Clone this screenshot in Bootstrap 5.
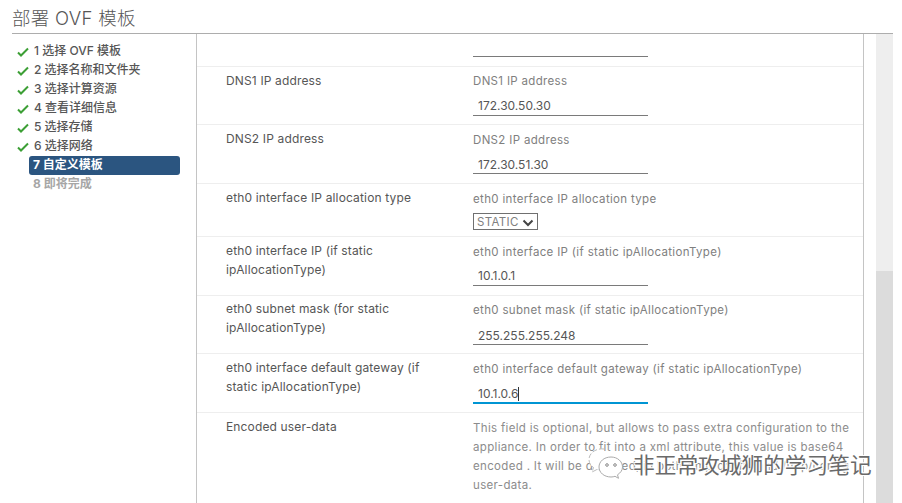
<!DOCTYPE html>
<html lang="zh"><head><meta charset="utf-8">
<link href="https://cdn.jsdelivr.net/npm/bootstrap@5.3.0/dist/css/bootstrap.min.css" rel="stylesheet">
<style>
html,body{height:503px;overflow:hidden;background:#fff}
body{font-family:"Inter","Noto Sans CJK SC",sans-serif;font-size:12px;color:#565656;position:relative}
.shell{padding:0 9px 0 12px;height:503px}
.ttl{height:34px;border-bottom:1px solid #adadad;font-size:18.5px;line-height:36px;font-weight:300;color:#565656;letter-spacing:.3px}
.body-wrap{height:469px}
.steps{width:185px;border-right:1px solid #c4c4c4;padding:8px 16px 0 5px;flex:none}
.stp{height:19px;line-height:17px;font-size:12px;font-weight:500;color:#565656;white-space:nowrap}
.stp.on{background:#2b5580;color:#fff;font-weight:700;border-radius:3px;margin-left:12px;padding-left:4px}
.stp.off{color:#a6a6a6;font-weight:700;margin-left:12px;padding-left:4px}
.chk{width:17px;flex:none}
.form-pane{width:667px;border-right:1px solid #c4c4c4;flex:none;overflow:hidden}
.rw{border-bottom:1px solid #eee;padding-left:29px;flex:none}
.h33{height:33px}.h58{height:58px}.h59{height:59px}.h53{height:53px}.h100{height:100px}
.lft{width:247px;flex:none;padding:4px 40px 0 0;line-height:19px;font-size:12px;color:#565656;letter-spacing:.15px}
.lft.tight{padding-top:3px}
.rgt{width:375px;flex:none;padding-top:7px;font-size:11.5px;color:#808080;line-height:15px;letter-spacing:.33px}
.rgt.p1{padding-top:8px}
.rgt.top0{padding-top:0}
.inp{width:175px;height:24px;border-bottom:1px solid #7a7a7a;margin-top:3px;padding:7px 0 0 5px;font-size:12px;line-height:16px;color:#565656;letter-spacing:0}
.inp.up{padding-top:6px}
.rgt.p1 .inp{margin-top:2px}
.rgt.top0 .inp{height:23px;margin:0}
.inp.act{border-bottom:2px solid #0095d3;height:25px}
.sel{display:inline-flex;align-items:center;gap:3px;border:1px solid #707070;height:17px;width:65px;margin-top:6px;padding:2px 0 0 3px;color:#808080;line-height:15px}
.caret{display:inline-block;width:1px;height:14px;background:#333;vertical-align:-3px}
.rgt.desc{line-height:19px;padding-top:6px;color:#8c8c8c;white-space:nowrap}
.gutter{width:12px;flex:none}
.track{width:17px;flex:none;background:#eee;position:relative}
.thumb{position:absolute;left:0;right:0;bottom:0;height:232px;background:#dcdcdc}
.wm{position:absolute;left:588px;top:446px;display:flex;align-items:center;gap:9px;color:#6a6a6a;font-size:21.7px;line-height:30px;white-space:nowrap;text-shadow:0 0 1px #fff,1px 1px 0 #fff,-1px -1px 0 #fff,1px -1px 0 #fff,-1px 1px 0 #fff}
.wm span{padding-top:4px}
</style></head><body>
<div class="shell">
<div class="ttl">部署 OVF 模板</div>
<div class="d-flex body-wrap">
 <div class="steps">
  <div class="stp d-flex"><span class="chk"><svg width="12" height="19" viewBox="0 0 12 19"><path d="M1 10.500l3 3 7-7" fill="none" stroke="#3c9f35" stroke-width="2"/></svg></span>1 选择 OVF 模板</div>
  <div class="stp d-flex"><span class="chk"><svg width="12" height="19" viewBox="0 0 12 19"><path d="M1 10.500l3 3 7-7" fill="none" stroke="#3c9f35" stroke-width="2"/></svg></span>2 选择名称和文件夹</div>
  <div class="stp d-flex"><span class="chk"><svg width="12" height="19" viewBox="0 0 12 19"><path d="M1 10.500l3 3 7-7" fill="none" stroke="#3c9f35" stroke-width="2"/></svg></span>3 选择计算资源</div>
  <div class="stp d-flex"><span class="chk"><svg width="12" height="19" viewBox="0 0 12 19"><path d="M1 10.500l3 3 7-7" fill="none" stroke="#3c9f35" stroke-width="2"/></svg></span>4 查看详细信息</div>
  <div class="stp d-flex"><span class="chk"><svg width="12" height="19" viewBox="0 0 12 19"><path d="M1 10.500l3 3 7-7" fill="none" stroke="#3c9f35" stroke-width="2"/></svg></span>5 选择存储</div>
  <div class="stp d-flex"><span class="chk"><svg width="12" height="19" viewBox="0 0 12 19"><path d="M1 10.500l3 3 7-7" fill="none" stroke="#3c9f35" stroke-width="2"/></svg></span>6 选择网络</div>
  <div class="stp on">7 自定义模板</div>
  <div class="stp off">8 即将完成</div>
 </div>
 <div class="form-pane d-flex flex-column">
  <div class="rw d-flex h33"><div class="lft"></div><div class="rgt top0"><div class="inp"></div></div></div>
  <div class="rw d-flex h58"><div class="lft">DNS1 IP address</div><div class="rgt">DNS1 IP address<div class="inp up">172.30.50.30</div></div></div>
  <div class="rw d-flex h59"><div class="lft">DNS2 IP address</div><div class="rgt p1">DNS2 IP address<div class="inp">172.30.51.30</div></div></div>
  <div class="rw d-flex h53"><div class="lft">eth0 interface IP allocation type</div><div class="rgt p1">eth0 interface IP allocation type<div><span class="sel">STATIC <svg width="12" height="8" viewBox="0 0 12 8"><path d="M1.500 1.500l4.500 4.500 4.500-4.500" fill="none" stroke="#444" stroke-width="2"/></svg></span></div></div></div>
  <div class="rw d-flex h59"><div class="lft">eth0 interface IP (if static ipAllocationType)</div><div class="rgt p1">eth0 interface IP (if static ipAllocationType)<div class="inp up">10.1.0.1</div></div></div>
  <div class="rw d-flex h58"><div class="lft tight">eth0 subnet mask (for static ipAllocationType)</div><div class="rgt">eth0 subnet mask (if static ipAllocationType)<div class="inp">255.255.255.248</div></div></div>
  <div class="rw d-flex h59"><div class="lft">eth0 interface default gateway (if static ipAllocationType)</div><div class="rgt p1">eth0 interface default gateway (if static ipAllocationType)<div class="inp act">10.1.0.6<span class="caret"></span></div></div></div>
  <div class="rw d-flex border-0 h100"><div class="lft">Encoded user-data</div><div class="rgt desc">This field is optional, but allows to pass extra configuration to the<br>appliance. In order to fit into a xml attribute, this value is base64<br>encoded . It will be decoded, in both /tmp/config and /tmp/config<br>user-data.</div></div>
 </div>
 <div class="gutter"></div>
 <div class="track"><div class="thumb"></div></div>
</div>
</div>
<div class="wm"><svg width="36" height="32" viewBox="0 0 36 32"><path d="M16 2C8 1 1 6 1 12.500c0 3.500 1.700 6 4.500 8L4 25l5-2.500c2 .6 3.500.8 5 .8" fill="#fff" stroke="#bbb" stroke-dasharray="5 2"/><path d="M23 10c-7 0-12 4.500-12 10s5 10 12 10c1.500 0 3-.3 4-.7l3.500 2-1-3.500c3-2 5-4.500 5-7.800 0-5.500-5-10-11.500-10z" fill="#fff" stroke="#aaa"/><circle cx="19" cy="18" r="1.300" fill="none" stroke="#888"/><circle cx="27" cy="18" r="1.300" fill="none" stroke="#888"/></svg><span>非正常攻城狮的学习笔记</span></div>
</body></html>
